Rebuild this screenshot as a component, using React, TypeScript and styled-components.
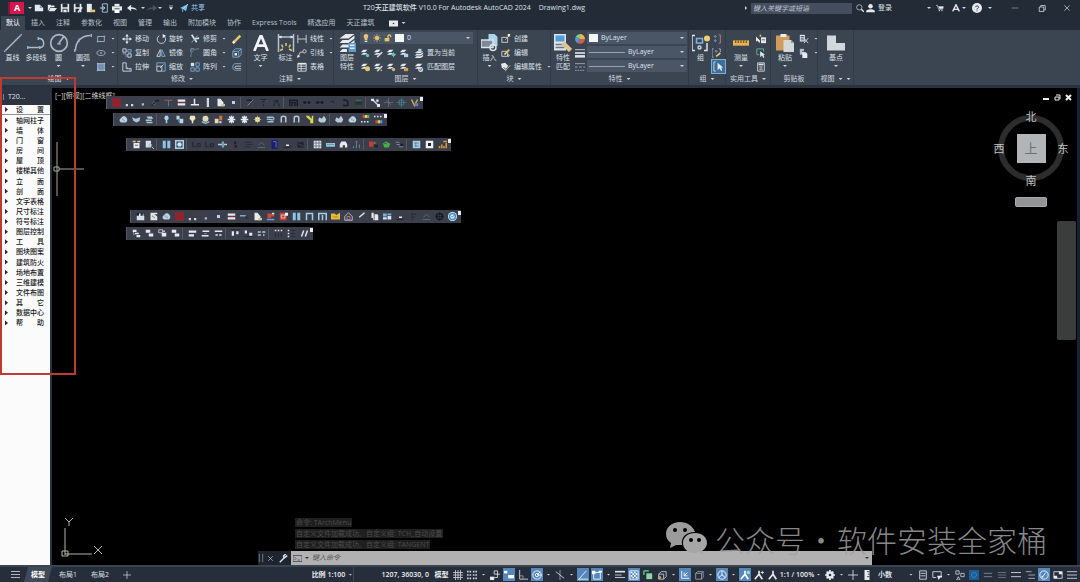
import React from 'react';
import styled, { createGlobalStyle, css } from 'styled-components';

const FONT = '"Open Sans", "Noto Sans CJK SC", sans-serif';

const c = {
  bar: '#222b36',
  ribbon: '#3b4451',
  field: '#4a5566',
  text: '#dde2e8',
  blue: '#7fb4e0',
  sky: '#a9d4ee',
  yellow: '#e9c46a',
  green: '#62c08a',
  red: '#a92b34',
  dark: '#1a1e28',
  hi: '#5587ba',
};

const Global = createGlobalStyle`
  *, *::before, *::after { box-sizing: border-box; }
  body { margin: 0; background: #000; font-family: ${FONT}; }
  button, input, select {
    font: inherit; color: inherit; background: none; border: 0; padding: 0; margin: 0; border-radius: 0; outline: 0;
  }
  ul { list-style: none; margin: 0; padding: 0; }
`;

/* ---------- icons: shapes on a 12 x 12 grid ---------- */
type Shape = { d: string; s?: string; f?: string; w?: number };
const s = (d: string, color = '#dde2e8', w = 1): Shape => ({ d, s: color, w });
const f = (d: string, color = '#e6e9ee'): Shape => ({ d, f: color });

const layer = f('M1 5L4 2H9L6 5ZM1 8L4 6H9L6 8Z');
const hole = (x: number, y: number, r: number) =>
  `M${x - r} ${y}a${r} ${r} 0 1 0 ${2 * r} 0a${r} ${r} 0 1 0 ${-2 * r} 0Z`;

const icons: Record<string, Shape[]> = {
  new: [f('M1 2H7L11 6V10H1Z'), f('M7 2L11 6H7Z', '#8e979f')],
  open: [f('M1 10V2H4L5 3H9V5H4Z'), f('M4 6H12L9 10H2Z')],
  save: [f('M1 1H11V11H1Z'), f('M3 1H9V5H3ZM3 7H9V11H3Z', c.bar), f('M4 8H8V11H4Z')],
  saveas: [f('M1 1H10V11H1Z'), f('M3 1H8V5H3ZM3 7H8V11H3Z', c.bar), s('M6 11L11 5', '#e6e9ee', 2)],
  mobileOpen: [f('M1 1H7V11H1Z'), f('M5 8H11V11H5Z', c.yellow)],
  mobileSave: [s('M4 1H10V11H4Z', c.sky), s('M1 6H7M5 4L7 6L5 8')],
  print: [f('M3 1H9V4H3Z'), f('M0 4H12V9H0Z'), f('M3 7H9V12H3Z', '#fff'), s('M3 7H9', c.bar)],
  undo: [f('M0 6L5 2V5C9 5 11 6 12 9C10 8 8 7 5 7V10Z')],
  redo: [f('M12 6L7 2V5C3 5 1 6 0 9C2 8 4 7 7 7V10Z', '#4b5561')],
  more: [s('M3 3H9', '#dde2e8'), f('M3 5H9L6 9Z')],
  plane: [f('M0 6L12 0L9 11L5 8Z', '#6fc0ea'), s('M4 12V8L12 0', '#bfe4f8')],
  search: [s(hole(5, 5, 4)), s('M8 8L12 12', '#dde2e8', 2)],
  user: [f(hole(6, 3, 3)), f('M0 11C0 8 2 7 6 7S12 8 12 11Z')],
  cart: [s('M0 2H2L4 8H10L11 4H3'), f('M4 4H11L10 7H5Z'), f(hole(5, 10, 1) + hole(9, 10, 1))],
  appA: [s('M1 11L6 1L11 11', '#e6e9ee', 2), f('M3 7H9V9H3Z')],
  help: [f(hole(6, 6, 6)), s('M4 5C4 3 8 3 8 5C8 6 6 6 6 8M6 9V10', c.bar)],
  min: [s('M1 6H11', '#9aa3ad')],
  restore: [s('M3 4H9V10H3ZM5 4V2H11V8H9')],
  close: [s('M2 2L10 10M10 2L2 10', '#dde2e8')],
  line: [s('M1 11L11 1', '#aeb9c6'), f('M0 11H1V12H0ZM11 0H12V1H11Z', c.blue)],
  pline: [s('M0 9H9C12 9 12 3 8 3', '#aeb9c6'), f('M0 8H1V10H0ZM7 2H8V4H7ZM8 8H9V10H8Z', c.blue)],
  circle: [s(hole(6, 6, 5), '#aeb9c6'), s('M6 6L9 2', '#aeb9c6'), f('M5 6H7V7H5Z', c.blue)],
  arc: [s('M1 11C1 5 5 1 11 1', '#aeb9c6'), f('M0 10H1V12H0ZM3 3H4V5H3ZM11 0H12V2H11Z', c.blue)],
  rect: [s('M2 3H10V9H2Z', '#aeb9c6'), f('M1 8H3V10H1ZM9 2H11V4H9Z', c.blue)],
  ellipse: [s('M1 6C1 2 11 2 11 6S1 10 1 6Z', '#aeb9c6'), f('M5 5H7V7H5Z', c.blue)],
  hatch: [f('M2 2H10V10H2Z', '#6f8fb5'), s('M1 2H11M1 10H11M2 1V11M10 1V11', '#b9c9dc')],
  move: [s('M6 1V11M1 6H11', '#e6e9ee', 1), f('M6 0L8 3H4ZM6 12L8 9H4ZM0 6L3 4V8ZM12 6L9 4V8Z')],
  copy: [s('M1 1H5V5H1ZM7 7H11V11H7Z'), s('M7 2H11V5H7ZM1 7H5V11', c.blue)],
  stretch: [s('M1 1V11H11V8H5V1Z'), s('M5 5L10 10', c.blue)],
  rotate: [s('M4 2A5 5 0 1 0 9 2'), f('M8 0L12 2L8 5Z')],
  mirror: [s('M5 2V10H1Z', '#dde2e8'), s('M7 2V10H11Z', c.blue)],
  scale: [s('M1 5H7V11H1Z'), s('M1 5V1H11V11H7', c.blue), s('M5 7L9 3')],
  trim: [s('M2 1L8 10M5 6L11 5', '#dde2e8', 2), s('M2 10L9 2', c.blue)],
  fillet: [s('M1 11C1 4 4 1 11 1', '#7f8b99'), s('M1 5V1H5', c.blue)],
  array: [f('M1 1H5V5H1Z', '#dde2e8'), s('M7 1H11V5H7ZM1 7H5V11H1ZM7 7H11V11H7Z', c.blue)],
  erase: [s('M2 10L10 2', c.yellow, 3), s('M1 11L3 9', '#f4f0e0', 3)],
  explode: [s('M1 4L4 1H11V8L8 11H1ZM1 4H8V11M8 4L11 1', c.blue), f('M3 6H6V9H3Z')],
  offset: [s('M11 2H4C0 2 0 10 4 10H11', c.blue), s('M11 5H5C3 5 3 8 5 8H11')],
  textA: [s('M1 12L6 0L11 12M3 8H9', '#f2f4f6', 2)],
  dim: [s('M1 0V12M11 0V12M1 2H11', '#b9c2cc'), f('M1 2L3 1V3ZM11 2L9 1V3Z'), s('M6 6V8M3 7L4 9M9 7L8 9M2 11L4 10M10 11L8 10', c.yellow)],
  linear: [s('M1 1V11M11 1V11M1 6H11')],
  leader: [s('M1 11L4 5H7'), s(hole(9, 4, 2)), f('M0 12L1 8L4 10Z')],
  table: [s('M1 2H11V11H1ZM1 5H11M1 8H11M5 2V11'), f('M1 1H11V3H1Z')],
  layers: [f('M1 3L5 0H11L7 3ZM1 6L3 4H7L11 1V3L7 6ZM1 9L3 7H7L11 4V6L7 9ZM1 12L3 10H6V12Z'), f('M7 6H12V12H7Z', '#5b9bd0'), f('M8 7H11V8H8ZM8 9H11V10H8Z')],
  bulb: [f('M6 0C2 0 2 5 4 7V9H8V7C10 5 10 0 6 0Z', c.yellow), f('M4 10H8V12H4Z')],
  sun: [f(hole(6, 6, 3), c.yellow), s('M6 0V12M0 6H12M2 2L10 10M10 2L2 10', c.yellow)],
  unlock: [f('M1 6H8V11H1Z', c.yellow), s('M6 6V3C6 1 10 1 10 3V5', c.yellow, 2)],
  layA: [layer, f(hole(9, 9, 2), '#58c7c4')],
  layB: [layer, s('M5 11L11 5', '#c8d0d8', 2)],
  layC: [layer, f(hole(9, 8, 2), '#58c7c4'), s('M9 5V11M6 8H12', '#58c7c4')],
  layD: [layer, f('M6 7H11V11H6Z', c.sky)],
  layE: [f('M1 6L4 4H11L8 6ZM1 9L3 7H8L11 5V7L8 9ZM1 12L3 10H8L11 8V10L8 12Z'), f('M5 1H9V4H5Z', c.sky)],
  layF: [layer, f(hole(9, 8, 3), c.yellow)],
  layG: [layer, s('M5 11L11 5', '#c8d0d8', 2), f(hole(10, 10, 1), c.yellow)],
  layH: [layer, f('M6 7H11V11H6Z', '#d6a050')],
  layJ: [layer, f(hole(9, 9, 2), '#e0b070')],
  layI: [f('M1 5L4 2H10L7 5ZM1 8L4 6H10L7 8Z'), f(hole(8, 9, 3), '#cfd6dd'), s('M6 9L8 10L10 7', '#4a5566')],
  insert: [f('M5 0H9L11 2V8H5Z', c.sky), f('M0 4H8V9H0Z', '#7e8a97'), s('M0 4H8V9H0Z'), s(hole(8, 9, 2))],
  create: [s('M1 4H8V10H1Z'), s('M5 7L10 2', c.yellow), f('M8 0H11V3H8Z', '#f2ead0')],
  edit: [s('M1 4H8V10H1Z'), s('M4 8L10 2', c.yellow, 2), s(hole(9, 9, 1))],
  attr: [f('M0 2L5 1L9 5L5 10L1 7Z'), s('M3 6L6 9L11 2', '#3b4451'), s('M5 11L11 4', c.yellow)],
  props: [f('M0 0H8V11H0Z', '#dfe4ea'), f('M1 1H7V5H1Z', '#4f9bd8'), s('M1 7H7M1 9H7', '#6b7682'), s('M6 6L11 11', '#e2c58c', 3)],
  wheel: [f('M6 6V0A6 6 0 0 1 12 6Z', '#e6b84a'), f('M6 6H12A6 6 0 0 1 3 11Z', '#d85a4a'), f('M6 6L3 11A6 6 0 0 1 1 3Z', '#4f9bd8'), f('M6 6L1 3A6 6 0 0 1 6 0Z', '#7ccf8a')],
  lweight: [s('M0 2H12', '#dde2e8', 1), s('M0 6H12', '#dde2e8', 2), s('M0 10H12', '#dde2e8', 3)],
  ltype: [s('M0 2H12', '#aab3be'), s('M0 6H3M5 6H8M10 6H12M0 10H2M3 10H5M6 10H8M9 10H11', '#aab3be')],
  group: [s('M2 1H0V11H2M8 11H10V6'), s('M3 3H7V6H3Z', c.blue), s(hole(5, 9, 1), '#c9d2dc', 1), f(hole(10, 3, 2), '#f0d070')],
  ungroup: [s(hole(4, 3, 1) + hole(4, 8, 1), c.blue), s('M8 1H10V11H8', '#d87a8a')],
  groupEdit: [s('M2 1H0V11H2M8 1H10V5', '#aeb9c6'), s(hole(5, 4, 1), c.blue), s('M5 10L10 6', c.yellow, 2)],
  groupSel: [s('M3 1H1V11H3', '#bfe4c8'), f('M5 2V10L7 8L9 11L10 10L9 7H11Z')],
  ruler: [f('M0 4H12V8H0Z', '#e7b455'), s('M2 4V6M4 4V6M6 4V6M8 4V6M10 4V6', '#7a5a20')],
  quick: [f('M0 3V9L2 8L4 11L5 8Z'), f('M6 4H12V11H6Z'), f('M5 0L7 3H4Z', c.yellow), s('M7 7H11', '#3b4451')],
  selAll: [s('M1 1H9V4M1 1V8H4', c.green), f('M5 4V11L7 9L9 12L10 11L9 8H11Z')],
  calc: [s('M2 1H10V11H2Z'), s('M3 3H9', '#dde2e8', 2), s('M4 6H8M4 9H8M5 5V10M7 5V10', '#aab3be')],
  paste: [f('M0 1H9V11H0Z', '#cf9c5c'), f('M3 0H7V2H3Z', '#eceff2'), f('M5 4H10L12 6V12H5Z', '#d5d8da'), f('M10 4V6H12Z', '#8e979f')],
  cut: [f('M1 1H7V9H1Z'), s('M2 3H6M2 5H6M2 7H6', '#3b4451'), s('M6 5L11 11M11 5L6 11')],
  copyClip: [f('M1 1H6V8H1Z', '#b7bec7'), s('M4 4H9', '#3b4451'), f('M4 5H8L10 7V12H4Z')],
  base: [f('M0 1H6V6H12V11H0Z', '#d3d6da')],
  ribbonMin: [f('M0 2H12V10H0Z'), f(hole(6, 6, 1), c.bar)],
  grip: [s('M4 1V11M8 1V11', '#7b8592', 1)],
  wrench: [s('M1 11L7 5', '#dde2e8', 2), s('M11 2L9 4L7 5L6 3L9 0', '#dde2e8', 2)],
  prompt: [s('M0 2H12V10H0Z', '#3f4348'), s('M2 4L4 6L2 8M6 8H9', '#3f4348')],
  menu: [s('M0 2H12M0 6H12M0 10H12', '#dde2e8', 1)],
  plus: [s('M6 0V12M0 6H12', '#dde2e8', 1)],
  grid: [s('M3 0V12M6 0V12M9 0V12M0 3H12M0 6H12M0 9H12', '#c9d0d8')],
  dots: [f('M0 1H2V3H0ZM3 1H5V3H3ZM7 1H9V3H7ZM10 1H12V3H10ZM0 5H2V7H0ZM3 5H5V7H3ZM7 5H9V7H7ZM10 5H12V7H10ZM0 9H2V11H0ZM3 9H5V11H3ZM7 9H9V11H7ZM10 9H12V11H10Z', '#c9d0d8')],
  infer: [f('M0 8H5V12H0Z'), s('M5 9H9V1H5V5H12', '#dde2e8')],
  dyn: [f('M0 1H4V4H0Z', '#fff'), f('M5 6H12V10H5Z', '#fff')],
  ortho: [s('M2 0V11H12'), s('M2 7H6V11', '#9aa3ad')],
  polar: [s(hole(6, 6, 5), '#fff'), s('M6 6H12M6 6L10 2', '#fff'), s(hole(6, 6, 2), '#fff')],
  iso: [s('M6 0V12', '#9aa3ad'), s('M1 2L11 10', '#dde2e8')],
  otrack: [s('M1 11L10 1M0 11H12', '#fff')],
  osnap: [s('M2 3H10V11H2Z', '#fff'), f('M0 1H4V5H0ZM8 1H12V3H8Z', '#fff')],
  lwt: [s('M0 2H12', '#dde2e8', 2), s('M0 6H8', '#dde2e8', 1), s('M0 9H12', '#dde2e8', 1)],
  trans: [s('M1 1H11V11H1Z', '#fff'), f('M2 2H4V4H2ZM6 2H8V4H6ZM4 4H6V6H4ZM8 4H10V6H8ZM2 6H4V8H2ZM6 6H8V8H6ZM4 8H6V10H4ZM8 8H10V10H8Z', '#fff')],
  cycle: [f('M4 4H11V11H4Z', '#8fd7a2'), s('M1 1H7M1 1V6', '#4fae78', 2)],
  snap3d: [s('M2 5L5 2H11V8L8 11H2ZM2 5H8V11', '#c9d0d8'), f(hole(3, 9, 2), '#b5a26a')],
  ucs: [s('M2 1V10H11', '#fff'), s('M5 7L9 3M5 3V7H9', '#fff')],
  cube: [s('M2 4L4 2H11V9L9 11H2ZM2 4H9V11M9 4L11 2', '#9aa3ad')],
  gizmo: [s(hole(6, 6, 5), '#fff'), s('M6 1V6L2 9M6 6L10 9', '#fff')],
  ann: [s('M1 11L6 5L10 11M6 1V6', '#e6e9ee', 2)],
  annHi: [s('M1 11L6 5L10 11M6 1V6', '#fff', 2), f(hole(10, 3, 2), '#9fe0c8')],
  annAdd: [s('M1 11L6 5L10 11M6 1V6', '#e6e9ee', 2), s('M8 3H12M10 1V5', '#e6e9ee')],
  gear: [s(hole(6, 6, 3), '#e6e9ee', 3), s('M6 0V3M6 9V12M0 6H3M9 6H12M2 2L4 4M8 8L10 10M10 2L8 4M4 8L2 10', '#e6e9ee', 2)],
  units: [f('M3 0H9V12H3Z'), s('M6 2H9M7 5H9M6 8H9', '#26303c')],
  quickProp: [s('M2 1H10V11H2ZM3 4H9M3 7H9')],
  lockUi: [s('M1 2H11V8M1 2V9H5'), f('M6 7H12V9H10L8 12Z')],
  isolate: [s('M1 1H5V5H1ZM7 4H11V8H7ZM4 8L6 12H2Z', '#c9d0d8')],
  hw: [f('M0 0H12V12H0Z', '#1c5b94'), s(hole(6, 6, 3), '#3a8ac8')],
  barsA: [s('M1 4H11M1 8H11', '#8b95a1')],
  barsB: [s('M1 3H11M1 6H11M1 9H11', '#6f7985')],
  barsC: [s('M0 3H12M0 8H12', '#dde2e8')],
  barsD: [s('M1 2H8M4 6H12M4 10H12', '#b3bbc5')],
  iso2: [s(hole(6, 6, 5), '#fff'), s('M4 9L8 3', '#fff'), f(hole(4, 8, 1), '#fff')],
  clean: [s('M1 2H11V10H1Z'), f('M7 2H11V5H7ZM1 7H5V10H1Z')],
  // floating toolbars
  red: [f('M0 0H12V12H0Z', '#8c2430')],
  dotsLow: [f('M1 8H4V11H1ZM8 8H11V11H8Z', '#c7d6e2'), f('M5 3H6V4H5Z', c.red)],
  dotOne: [f('M5 7H8V10H5Z', '#a9bdd0'), f('M3 3H4V4H3Z', c.red)],
  compass: [s('M1 10L8 3L11 4', c.dark, 2), s(hole(4, 7, 2), '#5a6472')],
  tee: [s('M1 3H11', '#a86a66'), s('M6 3V11', '#79838f')],
  eq: [f('M1 2H11V5H1ZM1 7H11V10H1Z'), s('M1 6H11', c.red)],
  perp: [s('M6 1V9M1 9H12', '#e6e9ee', 2)],
  bar: [f('M5 0H8V12H5Z', '#c9dbe8')],
  page: [f('M2 1H6L10 6V11H2Z'), f('M7 8H12V11H7Z', '#c8cf8a')],
  dot: [f('M4 4H8V8H4Z', '#b6d5ec')],
  slash: [s('M2 10L10 2', '#8c96a3'), s('M1 3H8', c.dark, 2)],
  ink1: [s('M2 2H10M4 5H9M6 8V11', c.dark), s('M8 6L11 3', '#5d6673')],
  ink2: [s('M2 11L6 3L10 11M2 4H9', c.dark)],
  arch: [s('M1 11V3H11V11M4 11V6H8V11', c.dark, 2)],
  arrows: [s('M1 6H11', c.dark), f('M2 4H5V8H2ZM8 4H11V8H8Z', c.dark)],
  tick: [s('M3 5L7 4L8 7', c.dark)],
  step: [s('M3 2L9 4V10H3', c.dark, 2)],
  carG: [f('M1 5H11V9H1Z', '#1f3a2c'), s('M2 3H10', '#3f8a58')],
  nodes: [s('M2 2L10 10', '#c7d6e2', 2), f('M0 1H4V4H0ZM7 2H10V5H7ZM8 8H12V12H8Z')],
  cross: [s('M6 0V12M0 6H12M3 3L9 9', '#5f7388')],
  crossB: [s('M6 0V12M0 6H12M3 3H9V9H3Z', '#3f8590')],
  wand: [s('M2 2L6 10L10 2', '#b9b44a', 2), f('M6 7H11V11H6Z', '#7a6cc0')],
  cloud: [f('M3 10C0 9 0 5 3 4C4 1 9 1 10 4C12 6 11 9 9 10Z', '#b8d0e0'), s('M4 5L8 8', '#6d8ca5')],
  bird: [f('M0 3L5 5L11 3L10 8L6 10L2 8Z', '#a9c6d8')],
  stack: [f('M2 2H9L11 5H4ZM1 6H9V8H1ZM1 9H10V11H3Z', '#a9c8dc')],
  lamp: [f('M4 1H8L9 5L7 7V11H5V7L3 5Z', '#9fd6f0')],
  lamps: [f('M2 1H6V6H2ZM6 5H11V11H6Z', '#b9d8e8'), f('M4 6H6V9H4Z', '#5b88a5')],
  lampY: [f('M3 1H9L10 5L7 8V11H5V8L2 5Z', '#f0e6b8')],
  bulbs: [f(hole(6, 5, 4), '#ded9b6'), s('M1 9L6 11L11 9', '#8eb6cc', 2)],
  duo: [f('M1 5H6V11H1Z', '#e7d7ae'), f('M7 1H11V7H7Z', '#d87040'), f('M7 8H10V11H7Z', '#b8d0e0')],
  snow: [s('M6 1V11M1 6H11M3 2L9 10M9 2L3 10', '#e4eaef', 2)],
  star: [f('M3 3H9V9H3Z', '#f4eeba'), s('M6 1V11M1 6H11', '#d8c870')],
  wave: [s('M1 3H9L11 5M1 6C4 4 8 8 11 6M2 9H10', '#9cc4d8', 2)],
  hook: [s('M3 10V4C3 1 9 1 9 4V10', '#b8c8d4', 2), f('M5 8H7V10H5Z', '#4b5a68')],
  zig: [f('M1 1H5L9 5V1H11V11H7V7L3 4Z', '#d6d84a')],
  blob: [f('M2 3L5 5L8 1L11 6L9 10H3L0 7Z', '#b6cad8')],
  rainbow: [f('M2 0H5V4H2Z', '#d84a3a'), f('M5 0H8V4H5Z', '#e8d048'), f('M8 0H11V4H8Z', '#50b860'), s('M0 9H2M4 9H6M8 9H10', '#e6e9ee', 2)],
  rainbowLow: [s('M0 2H2M4 2H6M8 2H10', '#e6e9ee', 2), f('M2 7H5V11H2Z', '#d84a3a'), f('M5 7H8V11H5Z', '#e8d048'), f('M8 7H11V11H8Z', '#4aa0d8')],
  box: [f('M2 4H10V11H2Z'), f('M1 1H5V3H1ZM7 1H11V3H7Z', '#d8c890'), s('M4 7H8', '#3b4451')],
  pageFind: [f('M1 1H8V10H1Z', '#d5dfe7'), s(hole(7, 7, 2), '#8fb0c8'), s('M9 9L12 12')],
  pair: [f('M1 1H5V11H1ZM7 1H11V11H7Z', '#8cc6e6')],
  frameS: [s('M1 1H11V11H1Z', '#a9d4ee', 2), f(hole(6, 6, 3), '#cfe6f2')],
  inkBox: [s('M1 2V9H5M7 9V5H11V9H7', c.dark)],
  slab: [f('M0 5H12V7H0Z', '#b9cedd'), f('M5 2H8V10H5Z', '#7f9eb4')],
  inkBlk: [f('M4 2H7V5H4ZM5 7H8V10H5Z', c.dark), s('M3 6H8', '#5a2c34')],
  inkBars: [s('M1 3H10M3 6H11M1 9H9', '#242a35')],
  hill: [s('M2 7L6 3L10 7M1 10H11', '#667180')],
  door: [f('M2 0H10V12H2Z', '#1b1e6e'), s('M4 2H8V10', '#7d86d8')],
  dip: [f('M4 6H8V8H4Z', '#e6e9ee'), s('M1 10H9L11 8', c.dark)],
  inkFill: [f('M2 3H10V10H2Z', '#1d222c'), s('M3 5L9 8', '#4b5563')],
  sheet: [f('M1 1H11V11H1Z', '#e3e8ec'), s('M4 1V11M8 1V11M1 4H11M1 8H11', '#566270')],
  slabB: [f('M0 4H12V9H0Z', '#8fc6dc'), s('M1 6H11', '#5a8ca2')],
  house: [f('M1 6L3 2H9L11 6V10H8V7H5V10H1Z')],
  pipes: [s('M2 8V11M6 4V11M10 6V11', '#7796ae'), f('M5 2H7V3H5Z', '#bcd0de')],
  redBlk: [f('M0 2H6V9H0Z', '#c93a34'), f('M7 6H12V10H7Z', '#222831'), f('M6 3H9V5H6Z', '#6f8a48')],
  grnBlk: [f('M1 4L5 2L11 5L9 10H3Z', '#46b04e'), s('M0 3L6 5', '#1f3a2c')],
  gryBlk: [s('M1 3H6M2 6H9M5 9H11', '#8f9aa6'), f('M7 5H11V8H7Z', c.dark)],
  winB: [f('M1 1H11V11H1Z', '#a5cfe4'), s('M3 4H9M3 8H9M5 3V9', '#4c7590')],
  target: [f('M1 1H11V11H1Z', '#f0f2f4'), f('M4 4H8V8H4Z', '#20262f')],
  chart: [f('M1 8H3V11H1ZM4 6H6V11H4ZM7 8H9V11H7ZM7 1H12V3H7ZM10 4H12V11H10Z', '#dc9a36')],
  disks: [f('M1 1H5V5H1ZM7 1H11V5H7Z', '#1b2130'), f('M1 5H11V11H1Z', '#d6dee8'), f('M4 2H6V6H4ZM9 2H10V6H9Z')],
  doc: [f('M2 1H11V3H7L11 6V11H2Z', '#e3e8dc'), s('M4 5L8 8', '#40608a')],
  arrowS: [s('M0 5H8', '#7da7c7', 2), s('M8 5V8H11', c.dark)],
  flag: [f('M2 2H11V6H7V8H2Z', '#c94a3e'), s('M1 10H11', '#78a0c8', 2), f('M8 1H11V3H8Z')],
  stamp: [f('M1 1H10V11H1Z', '#c9403c'), s('M3 4H8V8H3Z', '#f0d8d4'), f('M8 1H12V5H8Z', '#f0f2f4')],
  gate: [s('M2 11V2H10V11', '#9fd0ea', 2)],
  gateM: [s('M1 11V2H11V11M6 4V11', '#9fd0ea', 2)],
  folder: [f('M0 2H5L7 4L12 1V10H0Z', '#e7b93c'), f('M3 6H9V7H3Z', '#a9791c')],
  home: [s('M1 6L6 1L11 6V11H1Z', '#d9dde2'), s('M4 6H8V10H4Z', '#c98a90')],
  tickW: [s('M3 7L10 1', '#dfe6ea', 2)],
  docs: [f('M2 1H5V8H2ZM6 3H10L11 5V11H6Z'), f('M4 8H6V11H4Z', '#9fb2c2')],
  tilesB: [f('M0 2H5V6H0ZM6 2H11V4H6Z', '#77b3e0'), f('M0 7H5V10H0ZM6 5H11V10H6Z', '#d3e4f0')],
  fork: [s('M4 1V11M4 3H10M4 7H8', '#20262f')],
  globe: [s(hole(6, 6, 4), '#171b24', 2), s('M6 0V12M0 6H12', '#171b24')],
  helpB: [f(hole(6, 6, 6), '#e8f1f8'), s(hole(6, 6, 4), '#3f90d0', 2), s('M4 5L6 7L9 3', '#2b6da6')],
  cas1: [f('M1 1H6V4H1ZM4 5H9V7H4ZM6 8H11V11H6Z'), s('M2 4V7H4', '#aab3be')],
  cas2: [f('M1 1H7V5H1ZM5 6H11V10H5Z')],
  cas3: [s('M1 1H6V5H1Z'), f('M5 5H11V10H5ZM7 2H9V4H7Z')],
  al1: [f('M1 2H11V5H1ZM1 7H8V10H1Z')],
  al2: [f('M2 2H11V4H2ZM1 8H10V10H1Z'), s('M4 6H8', '#8b95a1')],
  al3: [f('M1 2H11V4H1ZM2 7H5V9H2ZM7 7H10V9H7Z')],
  vt1: [f('M1 3H4V9H1ZM7 3H10V7H7Z'), s('M0 1H12', '#20262f')],
  vt2: [f('M1 2H4V6H1ZM7 5H11V9H7Z'), s('M1 10H11', '#20262f')],
  vt3: [f('M1 3H5V5H1ZM7 3H11V5H7ZM1 7H5V9H1ZM8 7H10V9H8Z', '#c3cad2')],
  grid3: [f('M1 1H3V3H1ZM5 1H7V3H5ZM9 1H11V3H9Z'), s('M2 5V11M6 5V11M10 5V11', '#242a35')],
  list3: [f('M1 1H3V3H1ZM1 5H3V7H1ZM1 9H3V11H1Z'), s('M5 2H11M5 6H11M5 10H11', '#242a35')],
  para: [s('M2 10L5 2M7 10L10 2', '#dfe4e9', 2)],
};

const Svg = styled.svg`
  display: block;
  flex: none;
`;

function Icon({ n, size = 10 }: { n: string; size?: number }) {
  return (
    <Svg width={size} height={size} viewBox="0 0 12 12" aria-hidden="true">
      {(icons[n] ?? []).map((p, i) => (
        <path key={i} d={p.d} fill={p.f ?? 'none'} stroke={p.s ?? 'none'} strokeWidth={p.w} />
      ))}
    </Svg>
  );
}

const Caret = styled.span`
  flex: none;
  width: 4px;
  height: 2px;
  background: #ced4db;
  clip-path: polygon(0 0, 100% 0, 50% 100%);
`;

/* ---------- page ---------- */
const Page = styled.div`
  position: relative;
  display: grid;
  grid-template-rows: auto 1fr auto;
  min-height: 100vh;
  font-size: 7px;
  line-height: 10px;
  color: ${c.text};
  overflow: hidden;
`;

const TitleBar = styled.header`
  display: flex;
  align-items: center;
  height: 16px;
  padding-left: 8px;
  background: ${c.bar};
`;

const Logo = styled.button`
  width: 16px;
  height: 12px;
  margin-right: 4px;
  background: #d3184d;
  border-left: 2px solid #8c1236;
  color: #fff;
  font-size: 9px;
  font-weight: 700;
  line-height: 12px;
`;

const Quick = styled.nav`
  display: flex;
  align-items: center;
  width: 355px;
`;

const IconBtn = styled.button<{ $w?: number }>`
  display: flex;
  flex: none;
  align-items: center;
  justify-content: center;
  width: ${(p) => p.$w ?? 13}px;
  height: 14px;
`;

const Share = styled.button`
  display: flex;
  align-items: center;
  gap: 3px;
  color: #9bd0ef;
`;

const AppTitle = styled.h1`
  flex: none;
  display: flex;
  gap: 8px;
  margin: 0;
  font-size: 7px;
  font-weight: 500;
  white-space: pre;
`;

const TitleRight = styled.div`
  display: flex;
  align-items: center;
  margin-left: auto;
`;

const WindowControls = styled.div`
  display: flex;
  margin-left: 10px;
`;

const Search = styled.input`
  width: 101px;
  height: 11px;
  margin: 0 1px 0 4px;
  padding: 0 2px;
  background: #454e60;
  font-style: italic;
  &::placeholder { color: #bcc3cd; opacity: 1; }
`;

const SideCaret = styled.span`
  width: 2px;
  height: 4px;
  background: #ced4db;
  clip-path: polygon(0 0, 100% 50%, 0 100%);
`;

const Login = styled.button`
  display: flex;
  align-items: center;
  gap: 3px;
  width: 61px;
`;

const Tabs = styled.nav`
  display: flex;
  gap: 1px;
  align-items: stretch;
  height: 14px;
  padding-left: 1px;
  background: ${c.bar};
`;

const Tab = styled.button<{ $on?: boolean }>`
  padding: 0 5px;
  line-height: 14px;
  color: #b9c1ca;
  ${(p) => p.$on && css`background: ${c.ribbon}; color: #fff;`}
`;

const RibbonToggle = styled.button`
  display: flex;
  align-items: center;
  gap: 4px;
  padding-left: 8px;
`;

const Ribbon = styled.div`
  display: flex;
  height: 58px;
  background: ${c.ribbon};
  border-bottom: 3px solid #2a323d;
`;

const Panel = styled.section<{ $w: number }>`
  display: flex;
  flex: none;
  flex-direction: column;
  width: ${(p) => p.$w}px;
  border-right: 1px solid #323a46;
`;

const PanelBody = styled.div<{ $inset?: number }>`
  display: flex;
  height: 43px;
  padding: 2px 0 0 ${(p) => p.$inset ?? 0}px;
`;

const PanelTitle = styled.button`
  display: flex;
  align-items: center;
  justify-content: center;
  gap: 4px;
  height: 12px;
  color: #d2d8df;
`;

const Big = styled.button<{ $w: number }>`
  display: flex;
  flex: none;
  flex-direction: column;
  align-items: center;
  width: ${(p) => p.$w}px;
  line-height: 9px;
`;

const BigIcon = styled.span`
  display: flex;
  align-items: center;
  justify-content: center;
  height: 21px;
`;

const BigCaret = styled(Caret)`
  margin-top: 3px;
`;

const Rows = styled.div<{ $w: number }>`
  display: grid;
  flex: none;
  grid-template-rows: repeat(3, 13px);
  row-gap: 1px;
  width: ${(p) => p.$w}px;
`;

const Row = styled.div`
  display: flex;
  align-items: center;
  gap: 5px;
`;

const Cmd = styled.button<{ $on?: boolean }>`
  display: flex;
  align-items: center;
  gap: 3px;
  white-space: nowrap;
  ${(p) => p.$on && css`padding: 1px; background: #3f6d99; outline: 1px solid #79aede;`}
`;

const LayerIcons = styled.div`
  display: flex;
  gap: 3px;
`;

const Combo = styled.label<{ $w: number }>`
  display: flex;
  align-items: center;
  gap: 3px;
  width: ${(p) => p.$w}px;
  height: 12px;
  padding: 0 3px 0 2px;
  background: ${c.field};
  select { flex: 1; min-width: 0; appearance: none; line-height: 10px; }
`;

const Swatch = styled.span`
  width: 9px;
  height: 8px;
  background: #f5f6f7;
`;

const Stroke = styled.span`
  width: 36px;
  height: 1px;
  background: #97a1ad;
`;

/* ---------- work area ---------- */
const Main = styled.main`
  display: grid;
  grid-template-columns: 50px 1fr;
  min-height: 0;
  background: #000;
`;

const Palette = styled.aside`
  display: flex;
  flex-direction: column;
  background: #fbfbfb;
  outline: 2px solid #2b3340;
`;

const PaletteHead = styled.h2`
  display: flex;
  align-items: center;
  gap: 4px;
  height: 17px;
  margin: 0;
  padding: 0 3px;
  background: #2b3440;
  font-size: 7px;
  font-weight: 400;
  &::before { content: ''; width: 1px; height: 6px; background: #7b8592; }
`;

const PaletteList = styled.ul`
  display: grid;
  grid-auto-rows: 1fr;
  height: 223px;
`;

const PaletteItem = styled.button`
  display: grid;
  grid-template-columns: 3px 28px;
  column-gap: 8px;
  align-items: center;
  width: 100%;
  height: 100%;
  padding-left: 5px;
  color: #14161a;
  font-weight: 500;
  text-align-last: justify;
  line-height: 9px;
  &::before {
    content: '';
    width: 3px;
    height: 5px;
    background: #222b3a;
    clip-path: polygon(0 0, 100% 50%, 0 100%);
  }
  li:first-child > & { border-bottom: 1px solid #8f9499; }
`;

const Canvas = styled.div`
  position: relative;
  min-width: 0;
  margin-left: 2px;
  background: #000;
  border-right: 3px solid #142231;
`;

const ViewLabel = styled.div`
  position: absolute;
  left: 3px;
  top: 3px;
  color: #d4d4d4;
`;

const Toolbar = styled.div<{ $x: number; $y: number }>`
  position: absolute;
  left: ${(p) => p.$x}px;
  top: ${(p) => p.$y}px;
  display: flex;
  align-items: center;
  height: 13px;
  padding: 0 2px 0 4px;
  background: #3b3f4b;
  box-shadow: inset 1px 0 #555b67;
`;

const Tool = styled.button`
  display: flex;
  align-items: center;
  justify-content: center;
  width: 13px;
  height: 13px;
`;

const Sep = styled.span`
  width: 4px;
  height: 11px;
  border-left: 1px solid #525965;
`;

const ToolClose = styled.button`
  position: absolute;
  top: 1px;
  right: 0;
  width: 3px;
  height: 4px;
  background: #e8eaec;
`;

const DocControls = styled.div`
  position: absolute;
  top: 4px;
  right: 4px;
  display: flex;
  gap: 1px;
  button { width: 10px; height: 10px; display: grid; place-items: center; }
`;

const ViewCube = styled.div`
  position: absolute;
  top: 22px;
  right: 8px;
  display: grid;
  grid-template-columns: 12px 52px 12px;
  grid-template-rows: 12px 52px 12px;
  place-items: center;
  color: #c4c4c4;
  font-size: 11px;
  line-height: 12px;
  font-family: "Noto Sans CJK SC", sans-serif;
  &::before {
    content: '';
    position: absolute;
    left: 5px;
    top: 5px;
    width: 66px;
    height: 66px;
    border: 6px solid #2d2d2d;
    border-radius: 50%;
  }
  > * { position: relative; }
`;

const Face = styled.button`
  width: 29px;
  height: 29px;
  background: #b2b5b7;
  color: #6c7072;
  font-size: 13px;
`;

const Wcs = styled.button`
  position: absolute;
  top: 109px;
  right: 30px;
  width: 32px;
  height: 10px;
  border: 1px solid #a8aaac;
  border-radius: 2px;
  background: #929496;
`;

const NavBar = styled.div`
  position: absolute;
  top: 133px;
  right: 1px;
  width: 19px;
  height: 119px;
  border-radius: 2px;
  background: #3b3d3d;
`;

const Crosshair = styled.svg`
  position: absolute;
  left: 0;
  top: 53px;
`;

const UcsMark = styled.svg`
  position: absolute;
  left: 8px;
  bottom: 0;
`;

const Command = styled.div`
  position: absolute;
  left: 206px;
  right: 205px;
  bottom: 0;
`;

const History = styled.div`
  display: flex;
  flex-direction: column;
  align-items: flex-start;
  gap: 2px;
  margin: 0 0 2px 37px;
  span { padding: 0 1px; background: #1f1f1f; color: #4c4c4c; line-height: 9px; white-space: nowrap; }
`;

const CommandRow = styled.div`
  display: flex;
  height: 14px;
  background: #1f252f;
`;

const CommandInput = styled.label`
  display: flex;
  flex: 1;
  align-items: center;
  gap: 3px;
  padding: 0 3px 0 2px;
  background: #b1b1b1;
  color: #33373c;
  input { flex: 1; min-width: 0; font-style: italic; }
  input::placeholder { color: #55595f; opacity: 1; }
  ${Caret} { background: #33373c; }
`;

const Highlight = styled.div`
  position: absolute;
  left: 0;
  top: 77px;
  width: 76px;
  height: 298px;
  border: 2px solid #bf3a30;
  pointer-events: none;
`;

const Watermark = styled.div`
  position: absolute;
  right: 33px;
  bottom: 20px;
  display: flex;
  align-items: center;
  color: rgba(160, 160, 160, 0.85);
  font-family: "Noto Sans CJK SC", sans-serif;
  font-size: 30px;
  font-weight: 300;
  line-height: 46px;
  pointer-events: none;
  svg { margin-right: 8px; }
  i { width: 32px; font-style: normal; text-align: center; }
`;

/* ---------- status bar ---------- */
const Status = styled.footer`
  display: flex;
  align-items: center;
  height: 17px;
  padding: 0 1px 0 6px;
  border-top: 2px solid #3a4452;
  background: #252e3a;
`;

const SheetTab = styled.button<{ $on?: boolean }>`
  height: 15px;
  padding: 0 7px;
  line-height: 15px;
  ${(p) => p.$on && css`
    background: #3f4958;
    color: #fff;
    font-weight: 700;
    clip-path: polygon(4px 0, 100% 0, calc(100% - 4px) 100%, 0 100%);
  `}
`;

const StatusRight = styled.div`
  display: flex;
  align-items: center;
  margin-left: auto;
`;

const StatusBtn = styled.button<{ $on?: boolean }>`
  display: flex;
  align-items: center;
  justify-content: center;
  width: 14px;
  height: 13px;
  ${(p) => p.$on && css`background: ${c.hi}; box-shadow: inset 1px 0 #252e3a, inset -1px 0 #252e3a;`}
`;

const StatusDrop = styled.button`
  display: flex;
  align-items: center;
  justify-content: center;
  width: 9px;
  height: 13px;
`;

const StatusText = styled.button<{ $w: number; $end?: boolean }>`
  display: flex;
  align-items: center;
  justify-content: ${(p) => (p.$end ? 'flex-end' : 'center')};
  gap: 3px;
  width: ${(p) => p.$w}px;
  height: 15px;
  color: #eceff2;
  font-weight: 600;
  white-space: nowrap;
  ${(p) => p.$end && css`padding-right: 3px; border-left: 1px solid #39424f;`}
`;

const Units = styled.label`
  display: flex;
  align-items: center;
  width: 42px;
  padding: 0 3px 0 4px;
  select { flex: 1; min-width: 0; appearance: none; font-weight: 600; }
`;

/* ---------- data ---------- */
const tabs = ['默认', '插入', '注释', '参数化', '视图', '管理', '输出', '附加模块', '协作', 'Express Tools', '精选应用', '天正建筑'];

const paletteItems = [
  '设 置', '轴网柱子', '墙 体', '门 窗', '房 间', '屋 顶', '楼梯其他', '立 面', '剖 面', '文字表格', '尺寸标注',
  '符号标注', '图层控制', '工 具', '图块图案', '建筑防火', '场地布置', '三维建模', '文件布图', '其 它', '数据中心', '帮 助',
];

const toolbars = [
  { x: 54, y: 8, tools: 'red dotsLow dotOne compass tee eq perp bar page dot | slash ink1 ink2 | arch arrows arrows tick step carG | nodes cross crossB wand' },
  { x: 61, y: 25, tools: 'cloud bird stack | lamp lamps lampY bulbs duo snow snow star wave hook hook zig blob | blob cloud rainbow rainbowLow' },
  { x: 74, y: 50, tools: 'box pageFind | pair frameS | inkBox inkBox slab inkBlk inkBars hill door dip inkFill | sheet slabB house pipes | redBlk grnBlk gryBlk | winB target chart' },
  { x: 78, y: 122, tools: 'disks doc cloud red dotsLow dotOne dot eq arrowS page flag stamp pair gate gateM folder home tickW docs tilesB dip fork hill globe helpB' },
  { x: 74, y: 139, tools: 'cas1 cas2 cas3 cas2 | al1 al2 al3 | vt1 vt2 vt3 | grid3 list3 para' },
];

const toggles = 'grid dots v infer dyn* ortho polar* v iso v otrack* osnap* v lwt trans* cycle snap3d v ucs* cube v gizmo* v annHi* annAdd ann';
const trays = 'quickProp lockUi v isolate hw barsA barsB barsC barsD iso2* clean menu';

const StatusIcons = ({ list }: { list: string }) => (
  <>
    {list.split(' ').map((k, i) =>
      k === 'v' ? (
        <StatusDrop key={i} aria-label="options"><Caret /></StatusDrop>
      ) : (
        <StatusBtn key={i} $on={k.endsWith('*')} aria-label={k}>
          <Icon n={k.replace('*', '')} size={10} />
        </StatusBtn>
      ),
    )}
  </>
);

type BigProps = { icon: string; label: React.ReactNode; w: number; size?: number; caret?: boolean };
const BigButton = ({ icon, label, w, size = 18, caret }: BigProps) => (
  <Big $w={w}>
    <BigIcon><Icon n={icon} size={size} /></BigIcon>
    <span>{label}</span>
    {caret && <BigCaret />}
  </Big>
);

type CmdDef = [icon: string, label?: string, caret?: boolean];
const CmdRows = ({ w, items }: { w: number; items: CmdDef[] }) => (
  <Rows $w={w}>
    {items.map(([icon, label, caret]) => (
      <Row key={icon}>
        <Cmd $on={icon === 'groupSel'} aria-label={label ? undefined : icon}>
          <Icon n={icon} size={icon === 'groupSel' ? 11 : 10} />
          {label}
        </Cmd>
        {caret && <Caret />}
      </Row>
    ))}
  </Rows>
);

export default function App() {
  return (
    <Page>
      <Global />
      <div>
        <TitleBar>
          <Quick>
            <Logo>A</Logo>
            <Caret />
            <IconBtn aria-label="new"><Icon n="new" /></IconBtn>
            <IconBtn aria-label="open"><Icon n="open" /></IconBtn>
            <IconBtn aria-label="save"><Icon n="save" /></IconBtn>
            <IconBtn aria-label="save as"><Icon n="saveas" /></IconBtn>
            <IconBtn aria-label="open from mobile"><Icon n="mobileOpen" /></IconBtn>
            <IconBtn aria-label="save to mobile"><Icon n="mobileSave" /></IconBtn>
            <IconBtn aria-label="print"><Icon n="print" /></IconBtn>
            <IconBtn $w={18} aria-label="undo"><Icon n="undo" /></IconBtn>
            <Caret />
            <IconBtn aria-label="redo"><Icon n="redo" /></IconBtn>
            <Caret />
            <IconBtn $w={18} aria-label="more"><Icon n="more" size={8} /></IconBtn>
            <Share><Icon n="plane" size={8} />共享</Share>
          </Quick>
          <AppTitle>
            <span>T20天正建筑软件 V10.0 For Autodesk AutoCAD 2024</span>
            <span>Drawing1.dwg</span>
          </AppTitle>
          <TitleRight>
            <SideCaret />
            <Search aria-label="搜索" placeholder="键入关键字或短语" />
            <IconBtn aria-label="search"><Icon n="search" size={8} /></IconBtn>
            <Login><Icon n="user" size={9} />登录</Login>
            <Caret />
            <IconBtn $w={18} aria-label="cart"><Icon n="cart" size={8} /></IconBtn>
            <IconBtn aria-label="apps"><Icon n="appA" size={8} /></IconBtn>
            <Caret />
            <IconBtn $w={22} aria-label="help"><Icon n="help" size={10} /></IconBtn>
            <Caret />
            <WindowControls>
              <IconBtn $w={26} aria-label="minimize"><Icon n="min" size={8} /></IconBtn>
              <IconBtn $w={26} aria-label="restore"><Icon n="restore" size={9} /></IconBtn>
              <IconBtn $w={26} aria-label="close"><Icon n="close" size={8} /></IconBtn>
            </WindowControls>
          </TitleRight>
        </TitleBar>
        <Tabs>
          {tabs.map((t, i) => <Tab key={t} $on={i === 0}>{t}</Tab>)}
          <RibbonToggle aria-label="ribbon"><Icon n="ribbonMin" size={9} /><Caret /></RibbonToggle>
        </Tabs>
        <Ribbon>
          <Panel $w={118}>
            <PanelBody>
              <BigButton icon="line" label="直线" w={25} />
              <BigButton icon="pline" label="多段线" w={22} />
              <BigButton icon="circle" label="圆" w={23} size={20} caret />
              <BigButton icon="arc" label="圆弧" w={26} caret />
              <CmdRows w={21} items={[['rect', '', true], ['ellipse', '', true], ['hatch', '', true]]} />
            </PanelBody>
            <PanelTitle>绘图 <Caret /></PanelTitle>
          </Panel>
          <Panel $w={129}>
            <PanelBody $inset={4}>
              <CmdRows w={34} items={[['move', '移动'], ['copy', '复制'], ['stretch', '拉伸']]} />
              <CmdRows w={34} items={[['rotate', '旋转'], ['mirror', '镜像'], ['scale', '缩放']]} />
              <CmdRows w={42} items={[['trim', '修剪', true], ['fillet', '圆角', true], ['array', '阵列', true]]} />
              <CmdRows w={12} items={[['erase'], ['explode'], ['offset']]} />
            </PanelBody>
            <PanelTitle>修改 <Caret /></PanelTitle>
          </Panel>
          <Panel $w={87}>
            <PanelBody>
              <BigButton icon="textA" label="文字" w={27} size={16} caret />
              <BigButton icon="dim" label="标注" w={23} size={18} />
              <CmdRows w={34} items={[['linear', '线性', true], ['leader', '引线', true], ['table', '表格']]} />
            </PanelBody>
            <PanelTitle>注释 <Caret /></PanelTitle>
          </Panel>
          <Panel $w={144}>
            <PanelBody>
              <BigButton icon="layers" label={<>图层<br />特性</>} w={26} />
              <Rows $w={114}>
                <Combo $w={113}>
                  <Icon n="bulb" size={8} /><Icon n="sun" size={8} /><Icon n="unlock" size={8} /><Swatch />
                  <select aria-label="图层"><option>0</option></select>
                  <Caret />
                </Combo>
                <Row>
                  <LayerIcons>
                    {['layA', 'layB', 'layC', 'layD'].map((n) => <button key={n} aria-label={n}><Icon n={n} /></button>)}
                  </LayerIcons>
                  <Cmd><Icon n="layE" />置为当前</Cmd>
                </Row>
                <Row>
                  <LayerIcons>
                    {['layF', 'layG', 'layJ', 'layH'].map((n) => <button key={n} aria-label={n}><Icon n={n} /></button>)}
                  </LayerIcons>
                  <Cmd><Icon n="layI" />匹配图层</Cmd>
                </Row>
              </Rows>
            </PanelBody>
            <PanelTitle>图层 <Caret /></PanelTitle>
          </Panel>
          <Panel $w={73}>
            <PanelBody>
              <BigButton icon="insert" label="插入" w={23} caret />
              <CmdRows w={48} items={[['create', '创建'], ['edit', '编辑'], ['attr', '编辑属性', true]]} />
            </PanelBody>
            <PanelTitle>块 <Caret /></PanelTitle>
          </Panel>
          <Panel $w={138}>
            <PanelBody>
              <BigButton icon="props" label={<>特性<br />匹配</>} w={24} />
              <CmdRows w={12} items={[['wheel'], ['lweight'], ['ltype']]} />
              <Rows $w={100}>
                <Combo $w={100}>
                  <Swatch />
                  <select aria-label="颜色"><option>ByLayer</option></select>
                  <Caret />
                </Combo>
                <Combo $w={100}>
                  <Stroke />
                  <select aria-label="线宽"><option>ByLayer</option></select>
                  <Caret />
                </Combo>
                <Combo $w={100}>
                  <Stroke />
                  <select aria-label="线型"><option>ByLayer</option></select>
                  <Caret />
                </Combo>
              </Rows>
            </PanelBody>
            <PanelTitle>特性 <Caret /></PanelTitle>
          </Panel>
          <Panel $w={37}>
            <PanelBody>
              <BigButton icon="group" label="组" w={23} />
              <CmdRows w={12} items={[['ungroup'], ['groupEdit'], ['groupSel']]} />
            </PanelBody>
            <PanelTitle>组 <Caret /></PanelTitle>
          </Panel>
          <Panel $w={45}>
            <PanelBody>
              <BigButton icon="ruler" label="测量" w={30} size={16} caret />
              <CmdRows w={12} items={[['quick'], ['selAll'], ['calc']]} />
            </PanelBody>
            <PanelTitle>实用工具 <Caret /></PanelTitle>
          </Panel>
          <Panel $w={47}>
            <PanelBody>
              <BigButton icon="paste" label="粘贴" w={28} caret />
              <CmdRows w={18} items={[['cut', '', true], ['copyClip', '', true]]} />
            </PanelBody>
            <PanelTitle>剪贴板</PanelTitle>
          </Panel>
          <Panel $w={36}>
            <PanelBody>
              <BigButton icon="base" label="基点" w={36} caret />
            </PanelBody>
            <PanelTitle>视图 <Caret /><Caret /></PanelTitle>
          </Panel>
        </Ribbon>
      </div>

      <Main>
        <Palette>
          <PaletteHead>T20...</PaletteHead>
          <PaletteList>
            {paletteItems.map((t) => <li key={t}><PaletteItem>{t}</PaletteItem></li>)}
          </PaletteList>
        </Palette>
        <Canvas>
          <ViewLabel>[−][俯视][二维线框]</ViewLabel>
          {toolbars.map((bar) => (
            <Toolbar key={bar.y} $x={bar.x} $y={bar.y} role="toolbar">
              {bar.tools.split(' ').map((t, i) =>
                t === '|' ? <Sep key={i} /> : <Tool key={i} aria-label={t}><Icon n={t} size={9} /></Tool>,
              )}
              <ToolClose aria-label="close" />
            </Toolbar>
          ))}
          <DocControls>
            <button aria-label="minimize"><Svg width="6" height="8"><path d="M0 6H6" stroke="#eee" strokeWidth="2" /></Svg></button>
            <button aria-label="restore"><Svg width="7" height="7"><path d="M1 3H5V6H1ZM2 1H6V5" stroke="#eee" fill="none" /></Svg></button>
            <button aria-label="close"><Svg width="7" height="7"><path d="M1 1L6 6M6 1L1 6" stroke="#eee" strokeWidth="2" /></Svg></button>
          </DocControls>
          <ViewCube>
            <span /><span>北</span><span />
            <span>西</span><Face>上</Face><span>东</span>
            <span /><span>南</span><span />
          </ViewCube>
          <Wcs aria-label="WCS" />
          <NavBar />
          <Crosshair width="34" height="56">
            <path d="M5 1V55M7 28H32M2 26H7V30H2Z" stroke="#a9a99c" fill="none" />
          </Crosshair>
          <UcsMark width="50" height="50">
            <path d="M5 13V40M2 36H8V41H2ZM5 39H32" stroke="#b5b5a8" fill="none" />
            <path d="M5 3L9 7L13 3M9 7V11M34 31L42 39M42 31L34 39" stroke="#b5b5a8" fill="none" />
          </UcsMark>
          <Command>
            <History>
              <span>命令: TArchMenu</span>
              <span>自定义文件加载成功。自定义组: TCH_自动设置</span>
              <span>自定义文件加载成功。自定义组: TANGENT</span>
            </History>
            <CommandRow>
              <IconBtn $w={6} aria-label="move"><Icon n="grip" size={10} /></IconBtn>
              <IconBtn $w={12} aria-label="close"><Icon n="close" size={7} /></IconBtn>
              <IconBtn $w={15} aria-label="customize"><Icon n="wrench" size={9} /></IconBtn>
              <CommandInput>
                <Icon n="prompt" size={9} />
                <Caret />
                <input aria-label="命令" placeholder="键入命令" />
                <Caret />
              </CommandInput>
            </CommandRow>
          </Command>
        </Canvas>
      </Main>

      <Status>
        <IconBtn $w={18} aria-label="menu"><Icon n="menu" size={9} /></IconBtn>
        <SheetTab $on>模型</SheetTab>
        <SheetTab>布局1</SheetTab>
        <SheetTab>布局2</SheetTab>
        <IconBtn $w={22} aria-label="add layout"><Icon n="plus" size={8} /></IconBtn>
        <StatusRight>
          <StatusText $w={42}>比例 1:100 <Caret /></StatusText>
          <StatusText $w={79} $end>1207, 36030, 0</StatusText>
          <StatusText $w={19}>模型</StatusText>
          <StatusIcons list={toggles} />
          <StatusText $w={34}>1:1 / 100%</StatusText>
          <StatusIcons list="v gear v plus units" />
          <Units>
            <select aria-label="单位"><option>小数</option></select>
            <Caret />
          </Units>
          <StatusIcons list={trays} />
        </StatusRight>
      </Status>

      <Highlight />
      <Watermark>
        <Svg width="41" height="34" viewBox="0 0 41 34">
          <path fill="#9c9c9c" d="M14 0C6 0 0 5 0 12C0 16 2 19 5 21L4 26L10 23H16C15 15 20 10 29 10C27 4 21 0 14 0Z" />
          <path fill="#a6a6a6" d="M29 11C22 11 17 15 17 21S22 31 29 31L33 30L37 33L36 29C39 27 41 24 41 21C41 15 36 11 29 11Z" />
          <path fill="#000" d="M7 8a2 2 0 1 0 4 0a2 2 0 1 0 -4 0ZM17 8a2 2 0 1 0 4 0a2 2 0 1 0 -4 0ZM23 18a2 2 0 1 0 4 0a2 2 0 1 0 -4 0ZM31 18a2 2 0 1 0 4 0a2 2 0 1 0 -4 0Z" />
        </Svg>
        <span>公众号</span><i>·</i><span>软件安装全家桶</span>
      </Watermark>
    </Page>
  );
}
